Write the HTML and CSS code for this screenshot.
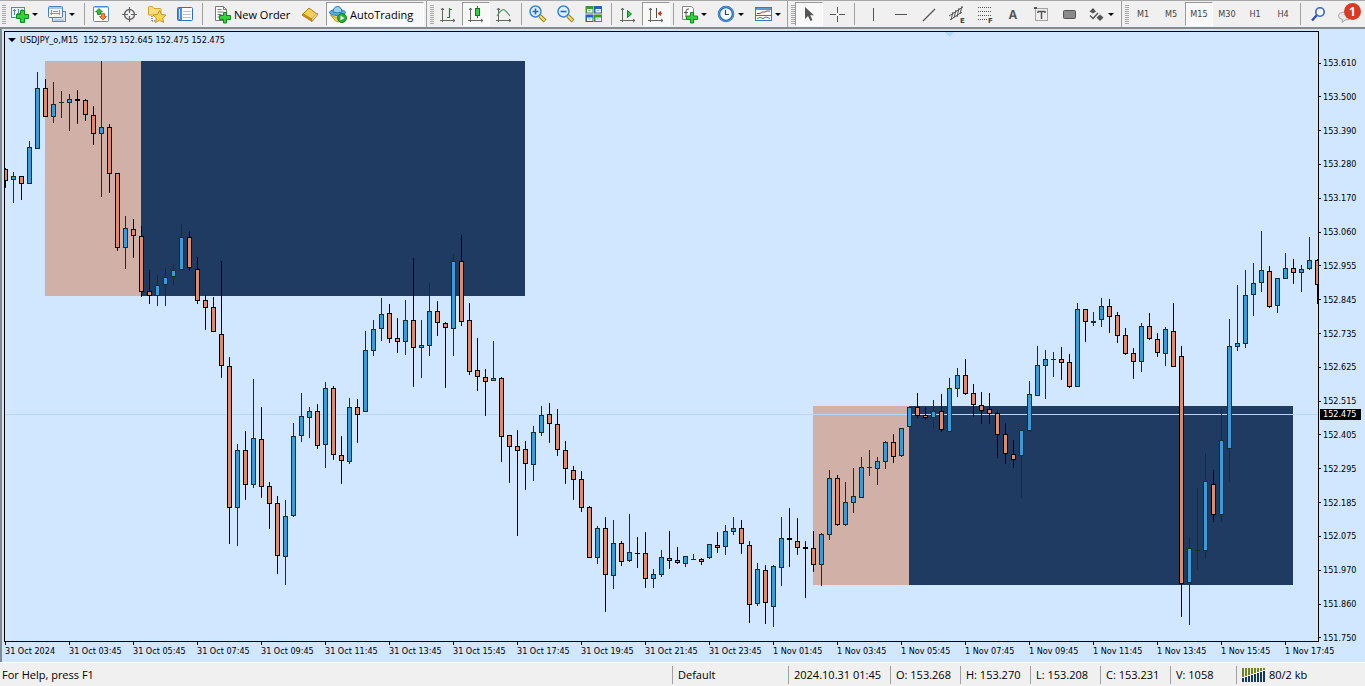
FILE: index.html
```html
<!DOCTYPE html>
<html lang="en">
<head>
<meta charset="utf-8">
<title>USDJPY_o,M15</title>
<link rel="stylesheet" href="styles.css">
</head>
<body>
<header class="toolbar">
  <div class="group group--first">
    <span class="grip"></span>
    <button class="tool tool--menu" aria-label="New chart"><svg class="icon" viewBox="0 0 20 20"><rect x="1.500" y="3.500" width="13" height="10" fill="#e9f3fb" stroke="#5b87b5"/><path d="M4.500 5v6M3 6.500h3M8.500 5v6M7 9.500h3M12 5v5" stroke="#5b87b5" fill="none"/><path d="M10.500 6.500h4v4h4v4h-4v4h-4v-4h-4v-4h4z" fill="#35d13a" stroke="#0c8a1c"/></svg><i class="caret"></i></button>
    <button class="tool tool--menu" aria-label="Profiles"><svg class="icon" viewBox="0 0 20 20"><rect x="5.500" y="7.500" width="13" height="10" fill="#d9e9f8" stroke="#5b87b5"/><path d="M7 16h10" stroke="#8fb3d8"/><rect x="1.500" y="2.500" width="14" height="11" rx="1" fill="#eef5fc" stroke="#4f80b5"/><path d="M2 4h13" stroke="#a9c8e8" stroke-width="2"/><path d="M4.500 6v5M3 9.500h10M12.500 6v5M6 7.500h5" stroke="#6f9cc8" fill="none"/></svg><i class="caret"></i></button>
    <span class="sep"></span>
    <button class="tool" aria-label="Market Watch"><svg class="icon" viewBox="0 0 20 20"><rect x="2.500" y="2.500" width="15" height="15" rx="1" fill="#fff" stroke="#4d8ed0"/><path d="M3 3.500h14" stroke="#9cc6ee"/><path d="M4.500 8 8 4.500 11.500 8 9.500 8 9.500 10.500 6.500 10.500 6.500 8z" fill="#2fbf3a" stroke="#128020" stroke-width=".8"/><path d="M8.500 12.500 12 16 15.500 12.500 13.500 12.500 13.500 9.500 10.500 9.500 10.500 12.500z" fill="#f58a3c" stroke="#c84d13" stroke-width=".8"/></svg></button>
    <button class="tool" aria-label="Data Window"><svg class="icon" viewBox="0 0 20 20"><circle cx="10.500" cy="10.500" r="5" fill="none" stroke="#666" stroke-width="1.400"/><path d="M10.500 3v6M10.500 12v6M3 10.500h6M12 10.500h6" stroke="#666" stroke-width="1.200"/></svg></button>
    <button class="tool" aria-label="Navigator"><svg class="icon" viewBox="0 0 20 20"><path d="M1.500 11V3.500q0-1 1-1h3l1.500 2h6q1 0 1 1V11z" fill="#fbdc7c" stroke="#d4a02e"/><path d="M5 12v5M5 17h4" stroke="#555" stroke-dasharray="1 1"/><path d="M12.500 6.500l2 4 4.500.5-3.300 3 1 4.500-4.200-2.300-4 2.300.8-4.500L6 11l4.500-.5z" fill="#fbd64d" stroke="#c9972a"/></svg></button>
    <button class="tool" aria-label="Terminal"><svg class="icon" viewBox="0 0 20 20"><rect x="2.500" y="3.500" width="15" height="13" rx="1" fill="#fff" stroke="#2f6fbe"/><rect x="3" y="4" width="4" height="12" fill="#4b90e0"/><path d="M4.500 5v10" stroke="#cfe4fb"/><path d="M8 7.500h8M8 10.500h8M8 13.500h8" stroke="#b5c6da"/></svg></button>
    <span class="sep"></span>
    <button class="tool tool--order"><svg class="icon" viewBox="0 0 20 20"><path d="M3.500 2.500h8l3 3v11h-11z" fill="#fff" stroke="#777"/><path d="M11.500 2.500v3h3" fill="none" stroke="#777"/><path d="M5.500 5.500h4M5.500 8h6M5.500 10.500h4M5.500 13h3" stroke="#777"/><path d="M11.500 8.500h3v3h4v4h-4v3.500h-3v-3.500h-4v-4h4z" fill="#35d13a" stroke="#0c8a1c"/></svg>New Order</button>
    <button class="tool" aria-label="MetaEditor"><svg class="icon" viewBox="0 0 20 20"><path d="M2 11 9 4l8.500 6.500L12 17.500z" fill="#f6cf56" stroke="#b07a14"/><path d="M2 11.500 12 17.500v-3L3.500 9.500z" fill="#c58c1c"/><path d="M12 17.500l5.500-6.500v-2L12 14.500z" fill="#fff3c0" stroke="#b07a14" stroke-width=".7"/></svg></button>
    <button class="tool tool--auto is-pressed"><svg class="icon" viewBox="0 0 20 20"><path d="M2.500 11q7 5 14-1l-3 7q-3 2-6 0z" fill="#f5d24c" stroke="#c09a20"/><ellipse cx="9.500" cy="8.500" rx="8" ry="3" fill="#5bb0e4" stroke="#2878b0"/><path d="M5 8Q5.500 2.500 9.500 2.500T14 8q-4.500 2-9 0z" fill="#8fd0f4" stroke="#2878b0"/><circle cx="14" cy="14" r="4.500" fill="#26b032" stroke="#128020"/><path d="M12.500 11.500v5l4-2.500z" fill="#fff"/></svg>AutoTrading</button>
  </div>
  <div class="group group--charts">
    <span class="grip"></span>
    <button class="tool" aria-label="Bar chart"><svg class="icon" viewBox="0 0 20 20"><path d="M4.500 4v14M2 16.500h15M3 6l1.500-2L6 6M15 15l2 1.500-2 1.500" fill="none" stroke="#606860"/><path d="M11.500 4v10M9 13.500h2.500M11.500 5.500H14" stroke="#178a2c" fill="none" stroke-width="1.200"/></svg></button>
    <button class="tool is-pressed" aria-label="Candlesticks"><svg class="icon" viewBox="0 0 20 20"><path d="M4.500 4v14M2 16.500h15M3 6l1.500-2L6 6M15 15l2 1.500-2 1.500" fill="none" stroke="#606860"/><path d="M11.500 2v12" stroke="#178a2c"/><rect x="9.500" y="4.500" width="4" height="7" fill="#2fcf45" stroke="#0c7a1c"/></svg></button>
    <button class="tool" aria-label="Line chart"><svg class="icon" viewBox="0 0 20 20"><path d="M4.500 4v14M2 16.500h15M3 6l1.500-2L6 6M15 15l2 1.500-2 1.500" fill="none" stroke="#606860"/><path d="M3 12q5-8 7.500-6t5.500 6" fill="none" stroke="#55a065" stroke-width="1.200"/></svg></button>
    <span class="sep"></span>
    <button class="tool" aria-label="Zoom in"><svg class="icon" viewBox="0 0 20 20"><path d="M12 12l5 5" stroke="#a58118" stroke-width="4"/><path d="M12 12l4.500 4.500" stroke="#f5da6a" stroke-width="2"/><circle cx="7.500" cy="7.500" r="5.500" fill="#dff0fc" stroke="#3b86cc" stroke-width="1.500"/><path d="M7.500 4.500v6M4.500 7.500h6" stroke="#2568b4" stroke-width="1.600"/></svg></button>
    <button class="tool" aria-label="Zoom out"><svg class="icon" viewBox="0 0 20 20"><path d="M12 12l5 5" stroke="#a58118" stroke-width="4"/><path d="M12 12l4.500 4.500" stroke="#f5da6a" stroke-width="2"/><circle cx="7.500" cy="7.500" r="5.500" fill="#dff0fc" stroke="#3b86cc" stroke-width="1.500"/><path d="M4.500 7.500h6" stroke="#2568b4" stroke-width="1.600"/></svg></button>
    <button class="tool" aria-label="Tile windows"><svg class="icon" viewBox="0 0 20 20"><path d="M1.500 2h8v7.500h-8zM10 10.500h8V18h-8z" fill="#3d9a28"/><path d="M10 2h8v7.500h-8zM1.500 10.500h8V18h-8z" fill="#2860b8"/><path d="M3 5h5.500v3.500H3zM11.500 5H17v3.500h-5.500zM3 13.500h5.500V17H3zM11.500 13.500H17V17h-5.500z" fill="#f2f8ff"/><path d="M4 6.500h3M12.500 6.500h3M4 15h3M12.500 15h3" stroke="#8fb8a8"/></svg></button>
    <span class="sep"></span>
    <button class="tool" aria-label="Auto scroll"><svg class="icon" viewBox="0 0 20 20"><path d="M4.500 4v14M2 16.500h15M3 6l1.500-2L6 6M15 15l2 1.500-2 1.500" fill="none" stroke="#606860"/><path d="M9.500 6.500v7l4-3.500z" fill="#35c045" stroke="#15802a"/></svg></button>
    <button class="tool is-pressed" aria-label="Chart shift"><svg class="icon" viewBox="0 0 20 20"><path d="M4.500 4v14M2 16.500h15M3 6l1.500-2L6 6M15 15l2 1.500-2 1.500" fill="none" stroke="#606860"/><path d="M10.500 4v10" stroke="#505050"/><path d="M16 9.500h-3M14.500 7.500l-2.500 2 2.500 2z" fill="#c8381c" stroke="#c8381c"/></svg></button>
    <span class="sep"></span>
    <button class="tool tool--menu" aria-label="Indicators"><svg class="icon" viewBox="0 0 20 20"><path d="M3.500 2.500h9l2 2v11h-11z" fill="#fff" stroke="#888"/><path d="M10 5q-3-.5-3 2v6M5 8.500h4" fill="none" stroke="#555"/><path d="M11.500 8.500h3v3.500h4v3.500h-4V19h-3v-3.500h-4V12h4z" fill="#35d13a" stroke="#0c8a1c"/></svg><i class="caret"></i></button>
    <button class="tool tool--menu" aria-label="Periods"><svg class="icon" viewBox="0 0 20 20"><circle cx="10" cy="10" r="7" fill="#f4faff" stroke="#1f66b8" stroke-width="2.600"/><circle cx="10" cy="10" r="7.300" fill="none" stroke="#6fb2ee" stroke-width=".8"/><path d="M9.500 6v4.500H13" fill="none" stroke="#444" stroke-width="1.200"/></svg><i class="caret"></i></button>
    <button class="tool tool--menu" aria-label="Templates"><svg class="icon" viewBox="0 0 20 20"><rect x="2.500" y="3.500" width="16" height="13" fill="#fff" stroke="#3b78b8"/><path d="M3 5h15" stroke="#5c9ad8" stroke-width="2"/><path d="M3 11.500h15" stroke="#3b78b8"/><path d="M4 9.500h3l2-1.500h3l2-1h3" fill="none" stroke="#a33a2a"/><path d="M4 14.500l3-1 3 1 3-1.500 4 1.500" fill="none" stroke="#3a8a48"/></svg><i class="caret"></i></button>
  </div>
  <div class="group group--draw">
    <span class="grip"></span>
    <button class="tool is-pressed" aria-label="Cursor"><svg class="icon" viewBox="0 0 20 20"><path d="M6 3v12l3-3 2.500 5 2-1-2.300-4.700H15z" fill="#555"/></svg></button>
    <button class="tool" aria-label="Crosshair"><svg class="icon" viewBox="0 0 20 20"><path d="M10.500 3v6M10.500 12v6M3 10.500h6M12 10.500h6" stroke="#555"/></svg></button>
    <span class="sep sep--wide"></span>
    <button class="tool" aria-label="Vertical line"><svg class="icon" viewBox="0 0 20 20"><path d="M10.500 4v13" stroke="#555"/></svg></button>
    <button class="tool" aria-label="Horizontal line"><svg class="icon" viewBox="0 0 20 20"><path d="M4 10.500h12" stroke="#555"/></svg></button>
    <button class="tool" aria-label="Trendline"><svg class="icon" viewBox="0 0 20 20"><path d="M4 17 16 5" stroke="#555" stroke-width="1.200"/></svg></button>
    <button class="tool" aria-label="Equidistant channel"><svg class="icon" viewBox="0 0 20 20"><path d="M2 12 16 3M3 16l12-8M6 8l-2 8M9 6 7 14M12 4l-2 9M15 2l-2 8" stroke="#555" fill="none"/><text x="13" y="19" class="icon-letter">E</text></svg></button>
    <button class="tool" aria-label="Fibonacci retracement"><svg class="icon" viewBox="0 0 20 20"><path d="M3 3.500h14M3 7.500h14M3 11.500h14M3 15.500h9" stroke="#555" stroke-dasharray="1 1"/><text x="13" y="19" class="icon-letter">F</text></svg></button>
    <button class="tool tool--letter" aria-label="Text">A</button>
    <button class="tool" aria-label="Text label"><svg class="icon" viewBox="0 0 20 20"><rect x="4.500" y="4.500" width="12" height="12" fill="none" stroke="#555" stroke-dasharray="1 1"/><path d="M3 3h3v2H3z" fill="#555"/><path d="M6.500 7.500h8M10.500 7v8M7 7v2M14 7v2" stroke="#555" stroke-width="1.500"/></svg></button>
    <button class="tool" aria-label="Rectangle"><svg class="icon" viewBox="0 0 20 20"><rect x="4.500" y="6.500" width="12" height="8" rx="1" fill="#8a8a8a" stroke="#555"/></svg></button>
    <button class="tool tool--menu" aria-label="Arrows"><svg class="icon" viewBox="0 0 20 20"><path d="M7 4 10 7.500 7 9.500 3.500 7.500zM14 10.500l3.500 3-3.500 3.500-3.500-3.500z" fill="#555"/><path d="M4 11.500l3 3 5-5.500" fill="none" stroke="#555" stroke-width="1.400"/></svg><i class="caret"></i></button>
  </div>
  <div class="group group--periods">
    <span class="grip"></span>
    <button class="tool">M1</button>
    <button class="tool">M5</button>
    <button class="tool is-pressed">M15</button>
    <button class="tool">M30</button>
    <button class="tool">H1</button>
    <button class="tool">H4</button>
    <span class="sep sep--wide"></span>
    <button class="tool" aria-label="Search"><svg class="icon" viewBox="0 0 20 20"><path d="M3 16.500 8 11" stroke="#2a50b0" stroke-width="2.400"/><circle cx="11" cy="8" r="4.200" fill="#f2f6ff" stroke="#3a62c4" stroke-width="1.600"/></svg></button>
    <button class="tool tool--chat" aria-label="Messages"><svg class="icon" viewBox="0 0 20 20"><path d="M8 8q6-1 6 3.500T8 16l-3 2.500.5-3Q1 14.500 1.500 11.500T8 8z" fill="#e8e8e8" stroke="#a0a0a0"/></svg><b class="badge">1</b></button>
  </div>
</header>

<main class="chart">
  <div class="frame">
    <svg class="plot" id="plot" viewBox="5 32 1313 609" preserveAspectRatio="none" role="img" aria-label="USDJPY 15 minute candlestick chart">
      <rect class="zone-range" x="45" y="61" width="96" height="235"/>
      <rect class="zone-session" x="141" y="61" width="384" height="235"/>
      <rect class="zone-range" x="813" y="406" width="96" height="179"/>
      <rect class="zone-session" x="909" y="406" width="384" height="179"/>
      <path class="shift-mark" d="M944 32h10l-5 5z"/>
      <rect class="bid-line" x="5" y="414" width="1313" height="1"/>
    </svg>
    <p class="quote"><i class="caret"></i>USDJPY_o,M15&nbsp; 152.573 152.645 152.475 152.475</p>
  </div>
  <div class="prices">
    <span>153.610</span><span>153.500</span><span>153.390</span><span>153.280</span><span>153.170</span><span>153.060</span><span>152.955</span><span>152.845</span><span>152.735</span><span>152.625</span><span>152.515</span><span>152.405</span><span>152.295</span><span>152.185</span><span>152.075</span><span>151.970</span><span>151.860</span><span>151.750</span>
    <strong class="bid-tag">152.475</strong>
  </div>
  <div class="times">
    <span>31 Oct 2024</span><span>31 Oct 03:45</span><span>31 Oct 05:45</span><span>31 Oct 07:45</span><span>31 Oct 09:45</span><span>31 Oct 11:45</span><span>31 Oct 13:45</span><span>31 Oct 15:45</span><span>31 Oct 17:45</span><span>31 Oct 19:45</span><span>31 Oct 21:45</span><span>31 Oct 23:45</span><span>1 Nov 01:45</span><span>1 Nov 03:45</span><span>1 Nov 05:45</span><span>1 Nov 07:45</span><span>1 Nov 09:45</span><span>1 Nov 11:45</span><span>1 Nov 13:45</span><span>1 Nov 15:45</span><span>1 Nov 17:45</span>
  </div>
</main>

<footer class="status">
  <span class="cell cell--help">For Help, press F1</span>
  <span class="cell cell--profile">Default</span>
  <span class="cell cell--date">2024.10.31 01:45</span>
  <span class="cell cell--price">O: 153.268</span>
  <span class="cell cell--price">H: 153.270</span>
  <span class="cell cell--price">L: 153.208</span>
  <span class="cell cell--price">C: 153.231</span>
  <span class="cell cell--volume">V: 1058</span>
  <span class="cell cell--traffic"><svg class="bars" viewBox="0 0 24 14"><path d="M1 0v9M4 0v8M7 0v7M10 0v6M13 0v5M16 0v4M19 0v3M22 0v2" stroke="#6f8420" stroke-width="2"/><path d="M1 10v4M4 9v5M7 8v6M10 7v7M13 6v8M16 5v9M19 4v10M22 3v11" stroke="#12395c" stroke-width="2"/></svg>80/2 kb</span>
</footer>
<script src="chart.js"></script>
</body>
</html>
```
FILE: styles.css
```css
* { box-sizing: border-box; }

body {
  margin: 0;
  min-height: 100vh;
  display: flex;
  flex-direction: column;
  background: #f0f0f0;
  color: #000;
  font-family: "DejaVu Sans Condensed", "DejaVu Sans", sans-serif;
  font-size: 9px;
  overflow: hidden;
}

/* Toolbar */
.toolbar {
  display: flex;
  height: 29px;
  flex: none;
  border-top: 1px solid #a8a8a8;
  border-bottom: 2px solid #858a92;
  background: #f0f0f0;
}
.group {
  display: flex;
  align-items: center;
  flex: none;
  padding-left: 3px;
  border-left: 1px solid #a0a0a0;
}
.group--first { padding-left: 2px; border-left: 0; width: 426px; }
.group--charts { width: 361px; }
.group--draw { width: 334px; }
.group--periods { flex: 1; }
.grip {
  width: 4px;
  height: 19px;
  flex: none;
  background: repeating-linear-gradient(#a8a8a8 0 1px, #f0f0f0 1px 2px);
}
.group--first .grip { margin-right: 1px; }
.tool {
  display: flex;
  align-items: center;
  justify-content: center;
  width: 28px;
  height: 24px;
  flex: none;
  padding: 0;
  border: 1px solid transparent;
  background: none;
  color: #444;
  font: inherit;
}
.tool.is-pressed {
  border-color: #999 #fff #fff #999;
  background: #f8f8f8;
}
.icon { width: 20px; height: 20px; flex: none; }
.icon-letter { font: bold 7px "DejaVu Sans", sans-serif; fill: #444; }
.caret {
  width: 0;
  height: 0;
  flex: none;
  border: 3px solid transparent;
  border-top-color: #000;
  border-bottom: 0;
}
.tool--menu { width: 37px; gap: 2px; padding-right: 3px; }
.tool--order, .tool--auto {
  justify-content: flex-start;
  gap: 2px;
  color: #000;
  font-family: "Open Sans", "Noto Sans", sans-serif;
  font-size: 11px;
  white-space: nowrap;
}
.tool--order { width: 91px; padding-left: 6px; }
.tool--auto { width: 98px; margin-left: 2px; padding-left: 1px; }
.tool--letter { font: bold 12px "Open Sans", sans-serif; color: #555; }
.tool--chat { position: relative; }
.badge {
  position: absolute;
  left: 10px;
  top: 0;
  width: 17px;
  height: 17px;
  border-radius: 50%;
  background: #d93a24;
  color: #fff;
  font: bold 12px/17px "Open Sans", sans-serif;
  text-align: center;
}
.sep {
  width: 1px;
  height: 22px;
  flex: none;
  margin: 0 2px 0 3px;
  background: #a0a0a0;
}
.sep--wide { margin-right: 4px; }

/* Chart */
.chart {
  flex: 1;
  display: grid;
  grid-template-columns: minmax(0, 1fr) 46px;
  grid-template-rows: minmax(0, 1fr) 20px;
  padding: 2px 0 0 2px;
  border-left: 2px solid #858a92;
  background: #d1e7ff;
}
.frame { position: relative; border: 1px solid #000; overflow: hidden; }
.plot { position: absolute; width: 100%; height: 100%; shape-rendering: crispEdges; }
.quote {
  position: absolute;
  left: 3px;
  top: 2px;
  margin: 0;
  display: flex;
  align-items: center;
  gap: 4px;
  line-height: 12px;
}
.quote .caret { border-width: 4px 4px 0; }
.zone-range { fill: #d0b0a7; }
.zone-session { fill: #1f3b62; }
.shift-mark { fill: #b3d7f7; }
.bid-line { fill: #b9d6f8; }
.bull-line { fill: #0f3327; }
.bull-body { fill: #3a9bd7; }
.bear-line { fill: #000; }
.bear-body { fill: #e08b66; }

.prices {
  position: relative;
  display: flex;
  flex-direction: column;
  justify-content: space-between;
  padding: 26px 0 0;
  margin-bottom: -2px;
  line-height: 12px;
}
.prices span { display: flex; align-items: center; gap: 2px; }
.prices span::before { content: ""; width: 2px; height: 1px; background: #000; }
.bid-tag {
  position: absolute;
  left: 1px;
  right: 4px;
  top: 61.6%;
  height: 11px;
  padding-left: 3px;
  background: #000;
  color: #fff;
  font-weight: normal;
  line-height: 11px;
}
.times {
  display: grid;
  grid-template-columns: repeat(20, minmax(0, 64fr)) minmax(0, 34fr);
  padding-left: 1px;
  white-space: nowrap;
  line-height: 12px;
}
.times span { text-indent: -1px; }
.times span::before { content: ""; display: block; width: 1px; height: 3px; background: #000; }

/* Status bar */
.status {
  display: flex;
  align-items: center;
  height: 24px;
  flex: none;
  border-top: 1px solid #fff;
  font-family: "Open Sans", "Noto Sans", sans-serif;
  font-size: 11px;
  white-space: nowrap;
}
.cell {
  display: flex;
  align-items: center;
  gap: 3px;
  height: 18px;
  padding-left: 5px;
  border-left: 1px solid #a0a0a0;
}
.cell--help { flex: 1; padding-left: 2px; border-left: 0; }
.cell--profile { width: 116px; }
.cell--date { width: 102px; }
.cell--price { width: 70px; }
.cell--volume { width: 66px; }
.cell--traffic { width: 129px; }
.bars { width: 24px; height: 14px; }
```
FILE: chart.js
```js
// One row per candle: direction (u = up, d = down), then high, body top, body bottom, low.
const candles = `
d168,169,181,188 u172,176,180,203 d176,176,184,200 u141,147,184,184 u72,88,149,149
d79,88,117,117 u82,104,117,123 u91,102,103,118 u94,99,103,131 d90,99,101,124
d99,100,115,121 d106,115,134,145 u61,127,134,197 d124,127,174,193 d173,173,248,251
u216,228,248,269 d219,229,236,258 d226,236,292,297 d270,291,296,304 u275,285,296,306
u268,277,285,306 u264,270,277,285 u224,237,270,271 d231,237,268,271 d257,269,301,304
d295,300,308,330 d297,307,332,332 d261,334,366,378 d357,366,508,544 u444,450,508,546
d431,450,485,500 u379,438,485,488 d407,439,487,498 d482,486,504,529 d496,503,556,574
u500,516,557,585 u423,436,516,517 u393,416,436,442 u407,411,418,438 d404,411,446,449
u382,388,445,468 d386,388,455,460 d436,455,461,484 u398,407,462,464 d399,407,415,443
u331,350,412,412 u320,329,351,356 u298,314,329,341 d304,313,339,343 d318,338,342,353
u300,320,342,355 d258,320,348,387 u320,345,348,378 u283,311,346,356 d301,311,323,336
d322,323,328,388 u254,261,329,356 d235,261,322,326 d303,320,372,375 d338,370,377,391
d369,377,382,416 u341,378,381,381 d377,378,437,462 d435,435,447,483 d430,446,451,536
d441,449,464,490 u426,432,465,481 u406,415,433,436 d403,414,424,443 d409,424,450,456
d441,450,469,484 d466,470,480,500 d471,479,508,512 d506,507,558,558 u526,528,558,564
d517,528,575,612 u520,543,576,589 d541,543,562,566 u514,552,561,562 d537,553,554,568
d532,553,579,588 u569,574,579,588 u550,557,575,577 d531,558,561,569 d547,560,563,564
u556,556,564,567 u554,559,560,560 d558,559,562,565 u544,544,558,559 d532,545,548,553
u525,531,547,555 u517,528,532,535 d520,528,544,554 d541,545,605,623 u563,569,604,606
d565,570,603,624 u565,566,607,627 u517,538,568,586 d508,538,540,567 d518,541,548,555
d541,547,549,598 d531,548,565,572 u533,534,565,586 u470,478,535,540 d475,478,525,526
u482,502,525,526 u468,496,503,513 u457,467,498,498 u450,467,468,476 u457,461,469,485
u441,442,462,469 d434,442,457,463 u428,428,456,457 u407,407,427,427 d393,407,416,418
d407,415,418,420 u400,411,418,428 d394,411,430,432 u378,388,432,432 u368,375,389,397
d359,375,394,395 d384,393,405,417 d392,405,411,424 d393,409,414,424 d411,413,435,458
d423,434,454,464 d440,454,460,468 u430,430,456,498 u381,394,431,432 u346,365,396,396
u350,359,366,399 u352,359,360,377 d347,359,363,380 d354,362,387,388 u303,309,387,387
d309,309,322,342 u312,321,323,326 u298,306,320,327 d299,306,317,333 d312,315,336,343
d328,335,354,355 d348,353,362,379 u323,326,362,372 d313,326,339,340 d333,339,353,357
u327,329,354,366 d303,331,367,367 d346,356,584,617 u537,548,583,625 u488,550,551,570
u453,481,551,559 d470,484,515,522 u409,440,515,522 u319,346,449,482 u285,343,347,351
u270,295,344,348 u263,283,295,316 u231,270,283,292 d266,271,307,308 u278,278,306,313
u253,268,279,279 d259,268,273,284 u265,269,273,292 u237,260,269,270 d259,260,285,304
`.trim().split(/\s+/);

const FIRST_X = 5;
const STEP = 8;
const plot = document.getElementById("plot");

function addRect(className, x, y, width, height) {
  const rect = document.createElementNS("http://www.w3.org/2000/svg", "rect");
  rect.setAttribute("class", className);
  rect.setAttribute("x", x);
  rect.setAttribute("y", y);
  rect.setAttribute("width", width);
  rect.setAttribute("height", height);
  plot.appendChild(rect);
}

candles.forEach((row, index) => {
  const kind = row[0] === "u" ? "bull" : "bear";
  const [high, top, bottom, low] = row.slice(1).split(",").map(Number);
  const x = FIRST_X + index * STEP;
  addRect(kind + "-line", x, high, 1, low - high);
  addRect(kind + "-line", x - 2, top, 5, bottom - top);
  if (bottom - top > 2) {
    addRect(kind + "-body", x - 1, top + 1, 3, bottom - top - 2);
  }
});
```
